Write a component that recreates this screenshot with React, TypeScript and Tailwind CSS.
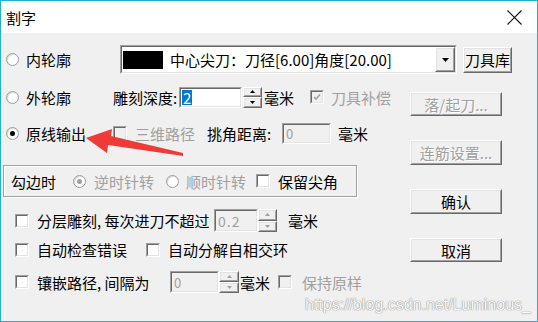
import React from "react";

const GRAY = "text-[#a0a0a0]";

function Radio({ checked = false, disabled = false }: { checked?: boolean; disabled?: boolean }) {
  return (
    <div className="w-[13px] h-[13px] shrink-0 rounded-full bg-white border border-[#9c9c9c] shadow-[inset_1px_1px_0_#dcdcdc] flex items-center justify-center">
      {checked && (
        <div className={`w-[5px] h-[5px] rounded-full ${disabled ? "bg-[#a0a0a0]" : "bg-black"}`} />
      )}
    </div>
  );
}

function Check({ checked = false, disabled = false }: { checked?: boolean; disabled?: boolean }) {
  return (
    <div className="w-[14px] h-[14px] shrink-0 border border-t-[#a0a0a0] border-l-[#a0a0a0] border-r-white border-b-white">
      <div
        className={`w-full h-full border border-t-[#696969] border-l-[#696969] border-r-[#e3e3e3] border-b-[#e3e3e3] flex items-center justify-center ${
          disabled ? "bg-[#f0f0f0]" : "bg-white"
        }`}
      >
        {checked && (
          <svg width="8" height="8" viewBox="0 0 8 8">
            <path d="M1 4 L3 6 L7 1.5" fill="none" stroke={disabled ? "#a0a0a0" : "#000"} strokeWidth="1.6" />
          </svg>
        )}
      </div>
    </div>
  );
}

function Sunken({ className, disabled = false, children }: { className: string; disabled?: boolean; children?: React.ReactNode }) {
  return (
    <div className={`shrink-0 border border-t-[#a0a0a0] border-l-[#a0a0a0] border-r-white border-b-white ${className}`}>
      <div
        className={`w-full h-full border border-t-[#696969] border-l-[#696969] border-r-[#e3e3e3] border-b-[#e3e3e3] flex items-center ${
          disabled ? "bg-[#f0f0f0]" : "bg-white"
        }`}
      >
        {children}
      </div>
    </div>
  );
}

function Raised({ className, children }: { className: string; children?: React.ReactNode }) {
  return (
    <div className={`shrink-0 border border-t-white border-l-white border-r-[#696969] border-b-[#696969] bg-[#f0f0f0] ${className}`}>
      <div className="w-full h-full border border-t-[#e3e3e3] border-l-[#e3e3e3] border-r-[#a0a0a0] border-b-[#a0a0a0] flex items-center justify-center">
        {children}
      </div>
    </div>
  );
}

function Tri({ up, color }: { up: boolean; color: string }) {
  return (
    <svg width="5" height="3" viewBox="0 0 5 3">
      <path d={up ? "M0 3 L2.5 0 L5 3 Z" : "M0 0 L5 0 L2.5 3 Z"} fill={color} />
    </svg>
  );
}

function Spin({ className, disabled = false }: { className: string; disabled?: boolean }) {
  const c = disabled ? "#a0a0a0" : "#000";
  return (
    <div className={`shrink-0 flex flex-col ${className}`}>
      <Raised className="w-full flex-1">
        <Tri up color={c} />
      </Raised>
      <Raised className="w-full flex-1">
        <Tri up={false} color={c} />
      </Raised>
    </div>
  );
}

function DisText({ children }: { children: React.ReactNode }) {
  return <span className="text-[#a0a0a0] [text-shadow:1px_1px_0_#ffffff]">{children}</span>;
}

export default function App() {
  return (
    <div className="relative w-[538px] h-[322px] flex flex-col border border-[#1db2cf] bg-[#f0f0f0] text-black text-[15px] leading-none font-['Noto_Sans_CJK_SC',sans-serif] overflow-hidden">
      {/* Title bar */}
      <div className="h-[32px] shrink-0 bg-white flex items-center pl-[5px] pr-[15px]">
        <span className="text-[15px]">割字</span>
        <div className="flex-1" />
        <svg width="15" height="15" viewBox="0 0 15 15">
          <path d="M0.5 0.5 L14.5 14.5 M14.5 0.5 L0.5 14.5" stroke="#111" strokeWidth="1.1" />
        </svg>
      </div>

      {/* Body */}
      <div className="flex-1 flex flex-col">
        {/* Row 1 */}
        <div className="mt-[12px] h-[29px] flex items-center pl-[5px]">
          <div className="w-[114px] flex items-center">
            <Radio />
            <span className="ml-[7px]">内轮廓</span>
          </div>
          <Sunken className="w-[337px] h-[29px]">
            <div className="ml-[1px] w-[40px] h-[18px] bg-black" />
            <span className="ml-[7px] whitespace-nowrap">中心尖刀：刀径[6.00]角度[20.00]</span>
            <div className="flex-1" />
            <Raised className="w-[20px] h-[25px]">
              <svg width="7" height="4" viewBox="0 0 7 4">
                <path d="M0 0 L7 0 L3.5 4 Z" fill="#000" />
              </svg>
            </Raised>
          </Sunken>
          <Raised className="ml-[6px] w-[49px] h-[26px]">
            <span>刀具库</span>
          </Raised>
        </div>

        <div className="flex">
          {/* Left column */}
          <div className="w-[409px] flex flex-col">
            {/* Row 2 */}
            <div className="mt-[11px] h-[24px] flex items-center pl-[5px]">
              <div className="w-[107px] flex items-center">
                <Radio />
                <span className="ml-[7px]">外轮廓</span>
              </div>
              <span className="w-[66px] whitespace-nowrap">雕刻深度:</span>
              <Sunken className="w-[63px] h-[21px]">
                <span className="ml-[1px] bg-[#0078d7] text-white px-[1px] h-[15px] flex items-center">2</span>
              </Sunken>
              <Spin className="ml-[1px] w-[19px] h-[21px]" />
              <span className="ml-[2px] w-[46px]">毫米</span>
              <Check checked disabled />
              <span className={`ml-[7px] ${GRAY}`}>刀具补偿</span>
            </div>

            {/* Row 3 */}
            <div className="mt-[13px] h-[22px] flex items-center pl-[5px]">
              <div className="w-[107px] flex items-center">
                <Radio checked />
                <span className="ml-[7px]">原线输出</span>
              </div>
              <Check disabled />
              <span className={`ml-[8px] w-[72px] ${GRAY}`}>三维路径</span>
              <span className="w-[75px] whitespace-nowrap">挑角距离:</span>
              <Sunken className="w-[49px] h-[21px]" disabled>
                <span className="ml-[2px] text-[13px] text-[#a0a0a0]">0</span>
              </Sunken>
              <span className="ml-[7px]">毫米</span>
            </div>

            {/* Group box */}
            <div className="mt-[21px] ml-[2px] w-[354px] h-[32px] border border-[#a0a0a0] shadow-[inset_1px_1px_0_#ffffff,1px_1px_0_#ffffff] flex items-center pl-[7px]">
              <span className="w-[62px]">勾边时</span>
              <Radio checked disabled />
              <span className={`ml-[8px] w-[72px] ${GRAY}`}>逆时针转</span>
              <Radio disabled />
              <span className={`ml-[7px] w-[70px] ${GRAY}`}>顺时针转</span>
              <Check />
              <span className="ml-[8px]">保留尖角</span>
            </div>

            {/* Row 5 */}
            <div className="mt-[12px] h-[23px] flex items-center pl-[14px]">
              <Check />
              <span className="ml-[8px] w-[177px] whitespace-nowrap">分层雕刻, 每次进刀不超过</span>
              <Sunken className="w-[44px] h-[23px]" disabled>
                <span className="ml-[2px] text-[14px] tracking-[1px] text-[#a0a0a0]">0.2</span>
              </Sunken>
              <Spin className="w-[19px] h-[23px]" disabled />
              <span className="ml-[11px]">毫米</span>
            </div>

            {/* Row 6 */}
            <div className="mt-[6px] h-[23px] flex items-center pl-[14px]">
              <Check />
              <span className="ml-[8px] w-[109px]">自动检查错误</span>
              <Check />
              <span className="ml-[8px]">自动分解自相交环</span>
            </div>

            {/* Row 7 */}
            <div className="mt-[10px] h-[22px] flex items-center pl-[14px]">
              <Check />
              <span className="ml-[8px] w-[133px] whitespace-nowrap">镶嵌路径, 间隔为</span>
              <Sunken className="w-[49px] h-[22px]" disabled>
                <span className="ml-[2px] text-[13px] text-[#a0a0a0]">0</span>
              </Sunken>
              <Spin className="w-[20px] h-[22px]" disabled />
              <span className="ml-[1px] w-[38px]">毫米</span>
              <Check disabled />
              <span className={`ml-[10px] ${GRAY}`}>保持原样</span>
            </div>
          </div>

          {/* Right column */}
          <div className="w-[92px] flex flex-col">
            <Raised className="mt-[18px] w-[92px] h-[24px]">
              <DisText>落/起刀...</DisText>
            </Raised>
            <Raised className="mt-[24px] w-[92px] h-[25px]">
              <DisText>连筋设置...</DisText>
            </Raised>
            <Raised className="mt-[24px] w-[92px] h-[25px]">
              <span>确认</span>
            </Raised>
            <Raised className="mt-[24px] w-[92px] h-[24px]">
              <span>取消</span>
            </Raised>
          </div>
        </div>
      </div>

      {/* Watermark */}
      <div className="absolute left-[304px] top-[296px] text-[16px] leading-none font-['Liberation_Sans',sans-serif] text-[#fafafa] [text-shadow:0_0_1px_#7a7a7a,0_0_1px_#9a9a9a] whitespace-nowrap">
        https://blog.csdn.net/Luminous_
      </div>

      {/* Red arrow annotation */}
      <svg className="absolute left-[-1px] top-[-1px]" width="538" height="322" viewBox="0 0 538 322">
        <polygon points="86,138 112,129 111,136 183,153 183,156 108,145 107,153" fill="#ef3b37" />
      </svg>
    </div>
  );
}
